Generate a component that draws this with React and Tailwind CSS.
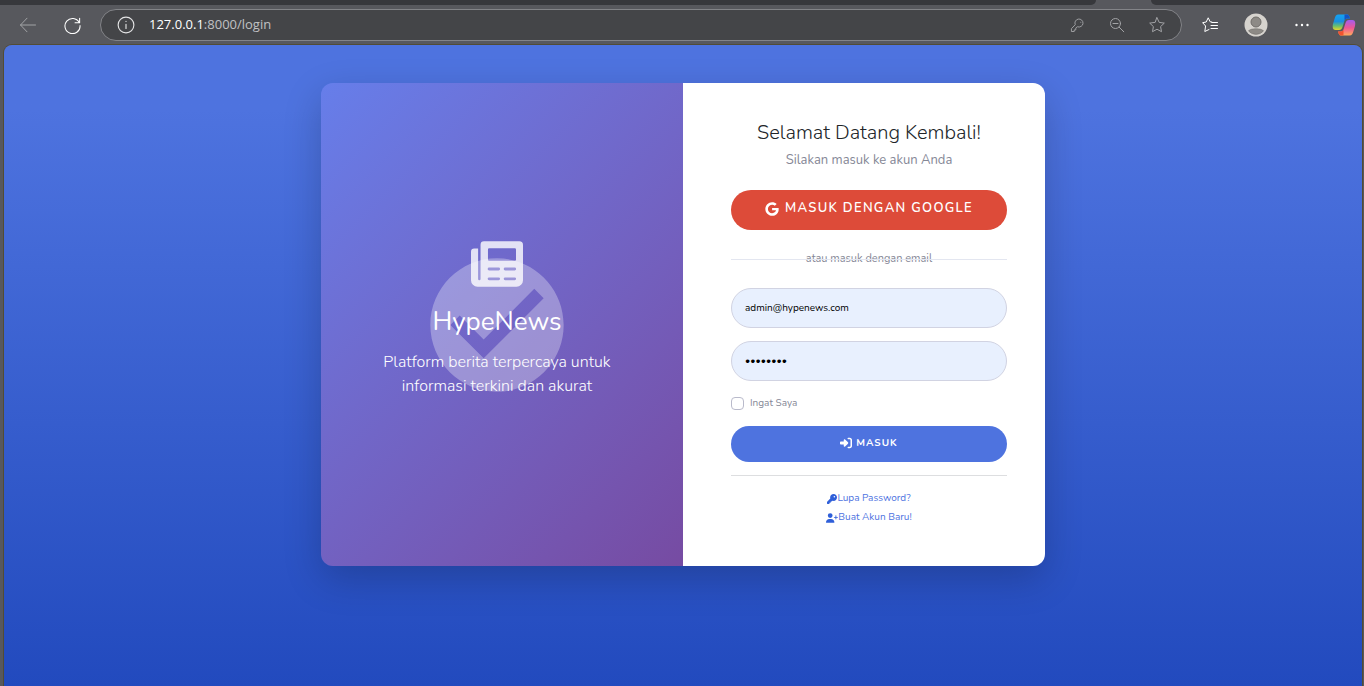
import React from "react";
import { FaGoogle, FaKey, FaUserPlus, FaRightToBracket } from "react-icons/fa6";

function IconButton({ label, className = "", children }) {
  return (
    <button type="button" aria-label={label} className={`flex size-6 shrink-0 items-center justify-center ${className}`}>
      {children}
    </button>
  );
}

function Stroke({ children, className = "size-4" }) {
  return (
    <svg viewBox="0 0 16 16" fill="none" stroke="currentColor" strokeWidth="1" strokeLinecap="round" strokeLinejoin="round" className={className} aria-hidden="true">
      {children}
    </svg>
  );
}

const star = "M8 .7l2.200 4.700 5.100.700-3.700 3.500.9 5.100L8 12.200l-4.500 2.500.9-5.100L.7 6.100l5.100-.7z";

function BrowserBar() {
  return (
    <header className="bg-[#57585d]">
      <div className="flex h-[5px]">
        <div className="flex-1 rounded-br-md bg-[#37383c]" />
        <div className="w-[55px]" />
        <div className="w-[213px] rounded-bl-md bg-[#37383c]" />
      </div>
      <div className="flex h-10 items-center pr-2 pl-4">
        <IconButton label="Kembali" className="text-[#a2a3a6]">
          <Stroke><path d="M15.500 8H.5M7 1.200L.5 8 7 14.800" /></Stroke>
        </IconButton>
        <IconButton label="Muat ulang" className="ml-5 text-white">
          <Stroke className="size-[17px]"><path d="M14.300 5.200A7.100 7.100 0 1 0 15.100 8M14.700 1.200v4.200h-4.300" /></Stroke>
        </IconButton>
        <div className="ml-4 flex h-8 flex-1 items-center rounded-full border border-[#838488] bg-[#444548] pr-3 pl-4">
          <Stroke className="size-[18px] text-[#e4e4e5]">
            <circle cx="8" cy="8" r="7" />
            <path d="M8 7.300v3.800M8 4.700v.2" />
          </Stroke>
          <div className="ml-[14px] flex-1 font-['Open_Sans',sans-serif] text-[13px] text-[#c0c1c3]">
            <span className="text-white">127.0.0.1</span>:8000/login
          </div>
          <div className="flex gap-4 text-[#a2a3a6]">
            <IconButton label="Kata sandi">
              <Stroke className="size-[15px]"><path d="M8.200 9.500a4.300 4.300 0 1 0-2.600-2.400L1.500 11.400v3h3v-1.700h1.700V11zM11.500 4.500v.1" /></Stroke>
            </IconButton>
            <IconButton label="Perkecil">
              <Stroke><circle cx="6.500" cy="6.500" r="5" /><path d="M10.200 10.200l4.600 4.600M4 6.500h5" /></Stroke>
            </IconButton>
            <IconButton label="Favorit"><Stroke><path d={star} /></Stroke></IconButton>
          </div>
        </div>
        <div className="ml-4 flex gap-[22px] text-white">
          <IconButton label="Daftar favorit">
            <Stroke>
              <path d="M9.800 5L8.200 4.800 6.200.8 4.200 5 .6 5.700l3 3.300-.8 5.500L7 12.500M9.800 5.500h5.700M9 8.500h6.500M9 11.500h6.500" />
            </Stroke>
          </IconButton>
          <IconButton label="Profil">
            <svg viewBox="0 0 24 24" className="size-6" aria-hidden="true">
              <circle cx="12" cy="12" r="11.500" fill="#d6d3ce" />
              <circle cx="12" cy="9" r="5" fill="#8d8a86" stroke="#6f6c69" />
              <path d="M4.500 18c1-3 14-3 15 0a10 10 0 0 1-15 0z" fill="#8d8a86" stroke="#6f6c69" strokeWidth=".5" />
            </svg>
          </IconButton>
          <IconButton label="Lainnya">
            <Stroke><g fill="currentColor" stroke="none"><circle cx="2.500" cy="8" r="1.200" /><circle cx="8" cy="8" r="1.200" /><circle cx="13.500" cy="8" r="1.200" /></g></Stroke>
          </IconButton>
        </div>
        <IconButton label="Copilot" className="ml-[18px]">
          <svg viewBox="0 0 24 24" className="size-6" aria-hidden="true">
            <defs>
              <linearGradient id="cool" x1="0" y1="0" x2="0" y2="1"><stop stopColor="#12a4f5" /><stop offset=".45" stopColor="#1a8fe0" /><stop offset=".75" stopColor="#6cc06a" /><stop offset="1" stopColor="#e8d42c" /></linearGradient>
              <linearGradient id="warm" x1="0" y1="0" x2="0" y2="1"><stop stopColor="#a45cf0" /><stop offset=".5" stopColor="#ee5696" /><stop offset="1" stopColor="#ffab5c" /></linearGradient>
            </defs>
            <path d="M6.500 1.500H15c1.800 0 2.500 2 3 4h-2.500c-2 0-2.800 1-3.300 3L10.500 14c-.7 2-1.500 3-3.500 3H3.500C.8 17 .3 14 1 11l1.500-5c.7-2.700 1.500-4.500 4-4.500z" fill="url(#cool)" />
            <path d="M12.500 1.500H15c1.800 0 2.500 2 3 4h-2.500c-1.500 0-2.400.6-3 1.800z" fill="#1453c4" />
            <path d="M17.500 22.500H9c-1.800 0-2.500-2-3-4h2.500c2 0 2.800-1 3.300-3l1.700-5.500c.7-2 1.500-3 3.500-3h3.500c2.700 0 3.200 3 2.500 6l-1.500 5c-.7 2.700-1.500 4.500-4 4.500z" fill="url(#warm)" />
            <path d="M6 18.500h2.500c1.500 0 2.400-.6 3-1.800v5.800H9c-1.800 0-2.500-2-3-4z" fill="#f0532f" />
          </svg>
        </IconButton>
      </div>
    </header>
  );
}

function Newspaper() {
  return (
    <svg viewBox="0 0 512 512" fill="currentColor" className="size-[52px] opacity-80" aria-hidden="true">
      <path
        fillRule="evenodd"
        d="M128 32H476a36 36 0 0 1 36 36V416a64 64 0 0 1-64 64H64a64 64 0 0 1-64-64V136a32 32 0 0 1 32-32H70V404a12 12 0 0 0 24 0V66a34 34 0 0 1 34-34zM178 101a11 11 0 0 0-11 11V214a11 11 0 0 0 11 11H432a11 11 0 0 0 11-11V112a11 11 0 0 0-11-11zM178 291a14 14 0 0 0 0 28h94a14 14 0 0 0 0-28zm158 0a14 14 0 0 0 0 28h94a14 14 0 0 0 0-28zM178 388a14 14 0 0 0 0 28h94a14 14 0 0 0 0-28zm158 0a14 14 0 0 0 0 28h94a14 14 0 0 0 0-28z"
      />
    </svg>
  );
}

function BrandPanel() {
  return (
    <section className="relative flex flex-1 flex-col items-center justify-center bg-linear-135 from-[#667eea] to-[#764ba2] pr-12 pb-[14px] pl-[38px] text-center text-white">
      <svg viewBox="0 0 24 24" fill="currentColor" className="absolute top-1/2 left-1/2 -mt-20 -ml-[85px] size-40 opacity-30" aria-hidden="true">
        <path d="M12 2C6.480 2 2 6.480 2 12s4.480 10 10 10 10-4.480 10-10S17.520 2 12 2zm-2 15l-5-5 1.410-1.410L10 14.170l7.590-7.590L19 8l-9 9z" />
      </svg>
      <Newspaper />
      <h2 className="mt-4 text-[26px] leading-8">HypeNews</h2>
      <p className="mt-3 max-w-60 text-base leading-6 font-light">Platform berita terpercaya untuk informasi terkini dan akurat</p>
    </section>
  );
}

const field = "h-10 w-full rounded-full border border-[#d1d3e2] bg-[#e8f0fe] px-[13px] text-[10px] text-black outline-none";

function LoginPanel() {
  return (
    <section className="flex-1 bg-white pt-9 pr-[38px] pb-[39px] pl-12 text-center">
      <h1 className="text-xl leading-7 font-light text-[#212529]">Selamat Datang Kembali!</h1>
      <p className="mt-[3px] text-[13px] leading-5 text-[#858796]">Silakan masuk ke akun Anda</p>
      <button type="button" className="mt-5 flex h-10 w-full items-center justify-center gap-[6px] rounded-full bg-[#dd4b39] pb-[2px] text-[13px] font-semibold tracking-widest text-white">
        <FaGoogle className="size-[14px]" aria-hidden="true" />MASUK DENGAN GOOGLE
      </button>
      <div className="relative mt-[21px] text-[11px] leading-4 text-[#858796]">
        atau masuk dengan email
        <div className="absolute inset-x-0 top-1/2 h-px bg-[#e3e6f0]" />
      </div>
      <form onSubmit={(e) => e.preventDefault()}>
        <input type="email" aria-label="Email" defaultValue="admin@hypenews.com" className={`mt-[21px] ${field}`} />
        <input type="password" aria-label="Password" defaultValue="password" className={`mt-[13px] ${field}`} />
        <div className="mt-[14px] flex items-center gap-[6px]">
          <input id="remember" type="checkbox" className="size-[13px] appearance-none rounded border border-[#b9bacb] bg-white" />
          <label htmlFor="remember" className="text-[10px] leading-4 text-[#858796]">Ingat Saya</label>
        </div>
        <button type="submit" className="mt-[15px] flex h-9 w-full items-center justify-center gap-1 rounded-full bg-[#4e73df] pb-[2px] text-[10px] font-bold tracking-widest text-white">
          <FaRightToBracket className="size-3" aria-hidden="true" />MASUK
        </button>
      </form>
      <hr className="mt-[13px] border-[#dddee0]" />
      <nav className="mt-[13px] flex flex-col items-center text-[10px] leading-[19px] text-[#4e73df]">
        <a href="#lupa" className="flex items-center"><FaKey className="text-[#2f5fd9]" aria-hidden="true" />Lupa Password?</a>
        <a href="#daftar" className="flex items-center"><FaUserPlus className="size-3 text-[#2f5fd9]" aria-hidden="true" />Buat Akun Baru!</a>
      </nav>
    </section>
  );
}

export default function App() {
  return (
    <div className="flex min-h-screen flex-col bg-[#57585d] font-[Nunito,'Open_Sans',sans-serif]">
      <BrowserBar />
      <main className="mr-[2px] ml-1 flex-1 rounded-t-lg bg-linear-to-b from-[#4e73df] from-10% to-[#224abe] px-6 pt-[38px] pb-30 ring-1 ring-[#524c34]">
        <div className="mx-auto flex max-w-[724px] overflow-hidden rounded-xl shadow-[0_13px_38px_rgba(0,0,0,0.2)]">
          <BrandPanel />
          <LoginPanel />
        </div>
      </main>
    </div>
  );
}
